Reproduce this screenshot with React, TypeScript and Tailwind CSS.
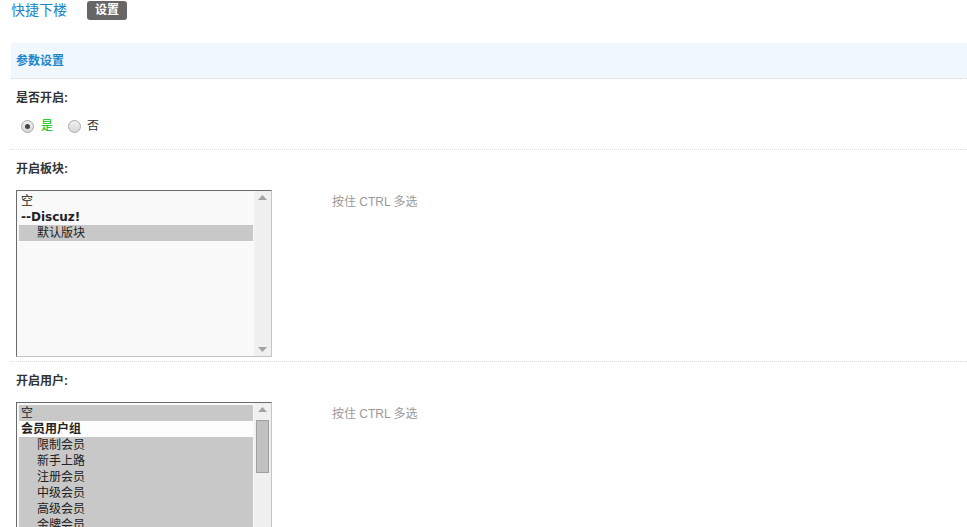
import React from "react";

const font = { fontFamily: '"Liberation Sans","Noto Sans CJK SC",sans-serif' };

function Radio({ checked }: { checked?: boolean }) {
  return (
    <span className="flex h-[13px] w-[13px] items-center justify-center rounded-full border border-[#a9a9a9] bg-gradient-to-b from-[#f0f0f0] to-[#d8d8d8]">
      {checked && <span className="h-[5px] w-[5px] rounded-full bg-[#444]" />}
    </span>
  );
}

function Scrollbar({ thumb }: { thumb?: boolean }) {
  return (
    <div className="relative w-[17px] bg-[#f0f0f0]">
      <svg className="absolute left-[4px] top-[4px]" width="9" height="5" viewBox="0 0 9 5">
        <path d="M0 5 L4.5 0 L9 5 Z" fill="#a3a3a3" />
      </svg>
      {thumb && (
        <div className="absolute left-[2px] top-[17px] h-[53px] w-[13px] border border-[#a0a0a0] bg-[#c1c1c1]" />
      )}
      <svg className="absolute bottom-[4px] left-[4px]" width="9" height="5" viewBox="0 0 9 5">
        <path d="M0 0 L4.5 5 L9 0 Z" fill="#a3a3a3" />
      </svg>
    </div>
  );
}

type Opt = { text: string; bold?: boolean; indent?: boolean; selected?: boolean; white?: boolean };

function FakeSelect({ options, thumb }: { options: Opt[]; thumb?: boolean }) {
  return (
    <div className="flex h-[167px] w-[256px] overflow-hidden border border-t-[#6b6b6b] border-l-[#6b6b6b] border-r-[#c4c4c4] border-b-[#c4c4c4] bg-[#f9f9f9]">
      <div className="flex-1 pl-[2px] pr-[1px] pt-[2px]">
        {options.map((o, i) => (
          <div
            key={i}
            className={`h-[16px] whitespace-nowrap text-[12px] leading-[16px] text-[#222] ${o.bold ? "font-bold" : ""} ${
              o.indent ? "pl-[18px]" : "pl-[2px]"
            } ${o.selected ? "bg-[#c8c8c8]" : o.white ? "bg-[#fdfdfd]" : ""}`}
            style={o.text.startsWith("--") ? { fontFamily: '"DejaVu Sans","Noto Sans CJK SC",sans-serif' } : undefined}
          >
            {o.text}
          </div>
        ))}
      </div>
      <Scrollbar thumb={thumb} />
    </div>
  );
}

function Tip() {
  return <div className="ml-[60px] pt-[4px] text-[12px] leading-[16px] text-[#999]">按住 CTRL 多选</div>;
}

export default function App() {
  return (
    <div className="min-h-[527px] bg-white pl-[11px]" style={font}>
      <div className="flex h-[20px] items-center">
        <span className="text-[14px] leading-[20px] text-[#1a86cc]">快捷下楼</span>
        <span className="ml-[20px] flex h-[19px] items-center rounded-[3px] bg-[#666] px-[8px] text-[12px] font-bold text-white">
          设置
        </span>
      </div>
      <div className="mt-[23px] flex h-[36px] items-center border-b border-dotted border-[#d8d8d8] bg-[#f0f7fd] pl-[5px] text-[12px] font-bold text-[#1a86cc]">
        参数设置
      </div>

      <div className="pl-[5px] pt-[10px] text-[12px] font-bold leading-[18px] text-[#333]">是否开启:</div>
      <div className="mt-[9px] box-content flex h-[20px] items-center border-b border-dotted border-[#dcdcdc] pb-[13px] pl-[10px] text-[12px] text-[#333]">
        <Radio checked />
        <span className="ml-[7px] text-[#00c000]">是</span>
        <span className="ml-[15px]">
          <Radio />
        </span>
        <span className="ml-[6px]">否</span>
      </div>

      <div className="pl-[5px] pt-[10px] text-[12px] font-bold leading-[18px] text-[#333]">开启板块:</div>
      <div className="mt-[12px] flex border-b border-dotted border-[#dcdcdc] pb-[4px] pl-[5px]">
        <FakeSelect
          options={[
            { text: "空" },
            { text: "--Discuz!", bold: true },
            { text: "默认版块", indent: true, selected: true },
          ]}
        />
        <Tip />
      </div>

      <div className="pl-[5px] pt-[10px] text-[12px] font-bold leading-[18px] text-[#333]">开启用户:</div>
      <div className="mt-[12px] flex pl-[5px]">
        <FakeSelect
          thumb
          options={[
            { text: "空", selected: true },
            { text: "会员用户组", bold: true, white: true },
            { text: "限制会员", indent: true, selected: true },
            { text: "新手上路", indent: true, selected: true },
            { text: "注册会员", indent: true, selected: true },
            { text: "中级会员", indent: true, selected: true },
            { text: "高级会员", indent: true, selected: true },
            { text: "金牌会员", indent: true, selected: true },
            { text: "论坛元老", indent: true, selected: true },
          ]}
        />
        <Tip />
      </div>
    </div>
  );
}
